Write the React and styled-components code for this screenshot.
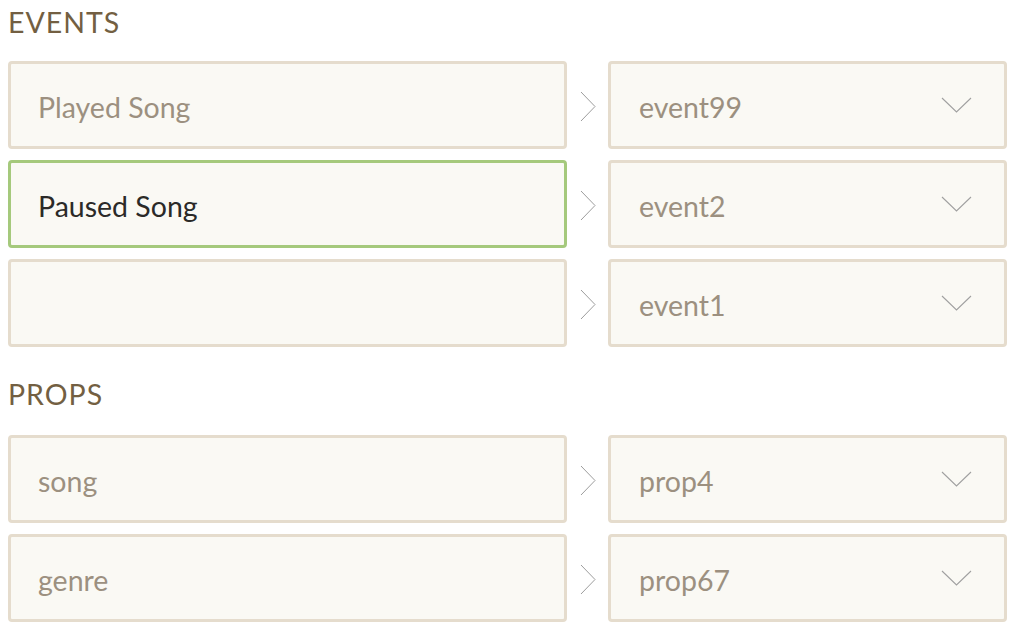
import React from "react";
import styled, { createGlobalStyle } from "styled-components";

const GlobalStyle = createGlobalStyle`
  html, body {
    margin: 0;
    padding: 0;
    background: #ffffff;
  }
  body {
    font-family: Lato, "Noto Sans", sans-serif;
  }
`;

const events = [
  { name: "Played Song", value: "event99" },
  { name: "Paused Song", value: "event2", active: true },
  { name: "", value: "event1" },
];

const props = [
  { name: "song", value: "prop4" },
  { name: "genre", value: "prop67" },
];

function ChevronRight() {
  return (
    <svg width="16" height="31" viewBox="0 0 16 31">
      <polyline
        points="1,1 15,15.5 1,30"
        fill="none"
        stroke="#9d9d9d"
        strokeWidth="1"
      />
    </svg>
  );
}

function ChevronDown() {
  return (
    <svg width="31" height="16" viewBox="0 0 31 16">
      <polyline
        points="1,1 15.5,15 30,1"
        fill="none"
        stroke="#a0a0a0"
        strokeWidth="1.1"
      />
    </svg>
  );
}

function MappingSection({ title, rows, first }) {
  return (
    <Section $first={first}>
      <Title $first={first}>{title}</Title>
      <Rows>
        {rows.map((row, i) => (
          <Row key={i}>
            <NameBox $active={row.active}>
              <Label $active={row.active}>{row.name}</Label>
            </NameBox>
            <Arrow>
              <ChevronRight />
            </Arrow>
            <SelectBox>
              <Label>{row.value}</Label>
              <ChevronDown />
            </SelectBox>
          </Row>
        ))}
      </Rows>
    </Section>
  );
}

export default function App() {
  return (
    <>
      <GlobalStyle />
      <Page>
        <MappingSection title="EVENTS" rows={events} first />
        <MappingSection title="PROPS" rows={props} />
      </Page>
    </>
  );
}

const Page = styled.div`
  width: 1016px;
  box-sizing: border-box;
  padding: 0 9px 0 8px;
`;

const Section = styled.section`
  margin-top: ${(p) => (p.$first ? "0" : "25px")};
`;

const Title = styled.h2`
  margin: 0 0 ${(p) => (p.$first ? "17px" : "19px")} 0;
  height: 44px;
  font-size: 28.5px;
  line-height: 44px;
  font-weight: 400;
  letter-spacing: 1px;
  color: #735f42;
`;

const Rows = styled.div`
  display: flex;
  flex-direction: column;
  gap: 11px;
`;

const Row = styled.div`
  display: grid;
  grid-template-columns: 559px 41px 1fr;
  height: 88px;
`;

const Box = styled.div`
  box-sizing: border-box;
  height: 88px;
  border: 3px solid #e5dccd;
  border-radius: 4px;
  background: #faf9f4;
  display: flex;
  align-items: center;
`;

const NameBox = styled(Box)`
  padding-left: 27px;
  border-color: ${(p) => (p.$active ? "#a5c97c" : "#e5dccd")};
`;

const SelectBox = styled(Box)`
  padding: 0 32px 0 28px;
  justify-content: space-between;
`;

const Label = styled.span`
  font-size: 28.5px;
  color: ${(p) => (p.$active ? "#2b2a28" : "#9c9080")};
  padding-top: 3px;
`;

const Arrow = styled.div`
  display: flex;
  align-items: center;
  justify-content: center;
  padding-top: 2px;
`;
